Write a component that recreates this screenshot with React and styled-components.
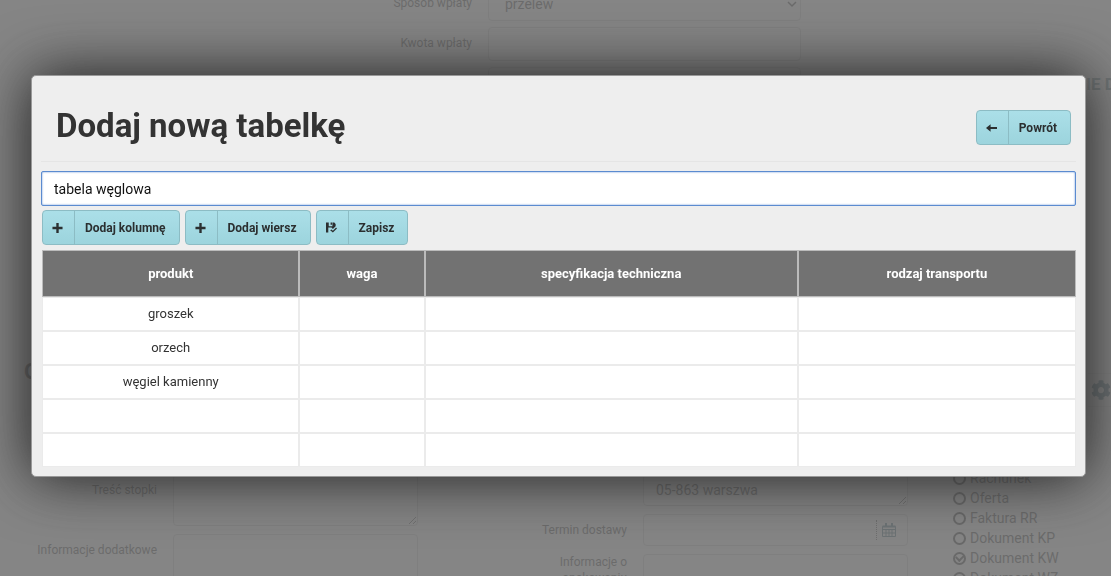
import React, { useState } from 'react';
import styled, { createGlobalStyle } from 'styled-components';
import { FaCog } from 'react-icons/fa';

const GlobalStyle = createGlobalStyle`
  * {
    box-sizing: border-box;
  }
  body {
    margin: 0;
    overflow: hidden;
    background: #f4f4f4;
    color: #444;
    font-family: Roboto, "Liberation Sans", sans-serif;
    font-size: 13px;
    line-height: 20px;
  }
  input, select, textarea, button {
    font-family: inherit;
  }
`

const Page = styled.main`
  height: 100vh;
  overflow: hidden;
  display: flex;
  flex-direction: column;
  justify-content: space-between;
`

const Top = styled.div`
  display: flex;
  justify-content: space-between;
`

const Payment = styled.section`
  display: grid;
  grid-template-columns: 472px 313px;
  column-gap: 16px;
  row-gap: 6px;
  margin-top: -13px;
`

const Label = styled.label`
  padding-top: ${props => props.$tall ? 0 : 6}px;
  font-size: 12px;
  line-height: ${props => props.$tall ? 16 : 20}px;
  text-align: right;
`

const fieldStyle = `
  width: 100%;
  margin: 0;
  border: 1px solid #ccc;
  border-radius: 4px;
  background: #f8f8f8;
  color: #444;
  font-size: 14px;
  line-height: 20px;
`

const Field = styled.input`
  ${fieldStyle}
  height: 34px;
  padding: 6px 12px;
`

const SelectWrap = styled.div`
  display: grid;
  align-items: center;
  svg {
    grid-area: 1 / 1;
    justify-self: end;
    margin-right: 4px;
    pointer-events: none;
  }
`

const Select = styled.select`
  ${fieldStyle}
  grid-area: 1 / 1;
  appearance: none;
  height: 34px;
  padding: 6px 16px;
`

const TextArea = styled.textarea`
  ${fieldStyle}
  display: block;
  height: 52px;
  padding: 5px 12px;
`

const Middle = styled.div`
  display: flex;
  justify-content: space-between;
  align-items: flex-end;
  height: 52px;
  margin-top: 187px;
  padding-left: 24px;
  color: #333;
`

const SectionTitle = styled.h2`
  margin: 0;
  align-self: flex-start;
  font-size: 22px;
  line-height: 34px;
`

const Gear = styled.div`
  display: flex;
  padding: 6px 0 6px 3px;
  border: 1px solid #ddd;
  border-width: 1px 0;
  color: #4a7280;
  font-size: 20px;
`

const SideTitle = styled.h2`
  margin: 0 0 7px;
  align-self: flex-end;
  width: 25px;
  white-space: nowrap;
  color: #5f8088;
  font-size: 17px;
  line-height: 20px;
`

const Details = styled.section`
  display: grid;
  grid-template-columns: 157px 245px 193px 265px 1fr;
  column-gap: 16px;
  height: 102px;
`

const Stack = styled.div`
  display: flex;
  flex-direction: column;
  gap: 8px;
`

const LabelCell = styled.div`
  display: flex;
  flex-direction: column;
  flex: 0 0 ${props => props.$height}px;
  padding-left: ${props => props.$indent || 0}px;
`

const Address = styled(TextArea)`
  height: 32px;
`

const DateBox = styled.div`
  ${fieldStyle}
  display: flex;
  height: 32px;
  input {
    flex: 1;
    min-width: 0;
    border: 0;
    background: none;
  }
`

const CalendarButton = styled.button`
  width: 31px;
  margin: 5px 0;
  padding: 0 6px 0 0;
  border: 0;
  border-left: 1px dotted #555;
  background: none;
  color: #4a7280;
  svg {
    display: block;
    margin: auto;
  }
`

const Options = styled.div`
  padding: 0 0 0 29px;
  margin-top: -6px;
`

const Option = styled.label`
  display: flex;
  align-items: center;
  gap: 4px;
  height: 20px;
  font-size: 14px;
`

const Radio = styled.input`
  appearance: none;
  display: flex;
  align-items: center;
  justify-content: center;
  width: 13px;
  height: 13px;
  margin: 0;
  border: 2px solid #333;
  border-radius: 50%;
  &:checked::before {
    content: '';
    width: 6px;
    height: 4px;
    margin-bottom: 2px;
    border: solid #333;
    border-width: 0 0 2px 2px;
    transform: rotate(-45deg);
  }
`

const Overlay = styled.div`
  position: fixed;
  inset: 0;
  display: flex;
  align-items: flex-start;
  padding: 75px 25px 0 31px;
  background: rgba(114, 114, 114, .86);
`

const Modal = styled.div`
  flex: 1;
  padding: 10px 9px 9px;
  border: 1px solid #999;
  border-radius: 5px;
  background: #eee;
  box-shadow: 0 0 60px #1c1c1c;
`

const Header = styled.header`
  display: flex;
  align-items: center;
  justify-content: space-between;
  height: 76px;
  padding: 8px 5px 0 15px;
  margin-bottom: 9px;
  border-bottom: 1px solid #e5e5e5;
`

const Title = styled.h1`
  margin: 0;
  padding-bottom: 4px;
  color: #333;
  font-size: 33px;
  line-height: 40px;
`

const NameInput = styled.input`
  display: block;
  width: 100%;
  height: 35px;
  padding: 6px 12px;
  border: 1px solid #5b8bd0;
  border-radius: 2px;
  outline: none;
  background: #fff;
  box-shadow: inset 0 0 2px #5b8bd0;
  color: #111;
  font-size: 14px;
`

const Toolbar = styled.div`
  display: flex;
  gap: 5px;
  padding: 4px 0 5px 1px;
`

const Button = styled.button`
  display: flex;
  height: 35px;
  padding: 0;
  border: 1px solid #8cbcc4;
  border-radius: 4px;
  background: linear-gradient(#abdfe8, #9cd4dd);
  color: #2b2f30;
  font-size: 12px;
  font-weight: bold;
  line-height: 33px;
  cursor: pointer;
  svg {
    width: 32px;
    height: 33px;
    padding: 11px 11px 10px 9px;
    border-right: 1px solid #8cbcc4;
  }
  span {
    padding: 1px 13px 0 10px;
  }
  &:hover {
    background: #9cd4dd;
  }
`

const Table = styled.table`
  width: 100%;
  padding-left: 1px;
  table-layout: fixed;
  border-collapse: separate;
  border-spacing: 0;
  color: #333;
  text-align: center;
`

const Th = styled.th`
  height: 47px;
  padding: 0;
  border: 1px solid #bbb;
  background: #727272;
  color: #fff;
`

const Td = styled.td`
  height: 34px;
  padding: 0;
  border: 1px solid #ebebeb;
  background: #fff;
`

const icons = {
  plus: <path d="M4.700 .5h2.600v4.200h4.200v2.600H7.300v4.200H4.700V7.300H.5V4.700h4.200z" />,
  back: <path d="M0 6L5 2V4.800H12V7.200H5V10z" />,
  save: (
    <path d="M0 0h3v4h4V0h2l1.500 1.500V4L7.500 7 6 5.500H2.500V11H0zM5 0h1.500v2.500H5zM4.500 8.500L6 7.500l1.500 1.500L11 5.500l1 1-4.500 4.500z" />
  ),
};

const IconButton = ({ icon, children, ...rest }) => (
  <Button type="button" {...rest}>
    <svg viewBox="0 0 12 12" fill="currentColor" aria-hidden="true">{icons[icon]}</svg>
    <span>{children}</span>
  </Button>
)

const CalendarIcon = () => (
  <svg width="14" height="14" viewBox="0 0 14 14" fill="none" stroke="currentColor" aria-hidden="true">
    <path d="M.5 3.500h13v10H.5zM.5 6.500h13M.5 10h13M4 6v7.500M7 6v7.500M10 6v7.500" />
    <path d="M.5 3.500h13M4 0v4M10 0v4" strokeWidth="2" />
  </svg>
)

const columns = ['produkt', 'waga', 'specyfikacja techniczna', 'rodzaj transportu'];
const widths = ['24.9%', '12.1%', '36.1%', '26.9%'];
const documents = ['Rachunek', 'Oferta', 'Faktura RR', 'Dokument KP', 'Dokument KW', 'Dokument WZ'];

const Background = () => (
  <Page>
    <Top>
      <Payment>
        <Label htmlFor="method">Sposób wpłaty</Label>
        <SelectWrap>
          <Select id="method"><option>przelew</option></Select>
          <svg width="10" height="10" viewBox="0 0 10 10" fill="none" stroke="#444" strokeWidth="1.5">
            <path d="M1 3l4 4 4-4" />
          </svg>
        </SelectWrap>
        <Label htmlFor="amount">Kwota wpłaty</Label>
        <Field id="amount" />
        <span />
        <Field aria-label="Waluta" />
      </Payment>
      <SideTitle>IE D</SideTitle>
    </Top>
    <Middle>
      <SectionTitle>O</SectionTitle>
      <Gear><FaCog /></Gear>
    </Middle>
    <Details>
      <Stack>
        <LabelCell $height={52}><Label htmlFor="footer">Treść stopki</Label></LabelCell>
        <LabelCell $height={52}><Label htmlFor="extra">Informacje dodatkowe</Label></LabelCell>
      </Stack>
      <Stack>
        <TextArea id="footer" />
        <TextArea id="extra" />
      </Stack>
      <Stack>
        <LabelCell $height={32} />
        <LabelCell $height={32}><Label htmlFor="term">Termin dostawy</Label></LabelCell>
        <LabelCell $height={52} $indent={90}><Label $tall htmlFor="packing">Informacje o opakowaniu</Label></LabelCell>
      </Stack>
      <Stack>
        <Address aria-label="Adres" defaultValue="05-863 warszwa" />
        <DateBox>
          <input id="term" />
          <CalendarButton type="button" aria-label="Kalendarz"><CalendarIcon /></CalendarButton>
        </DateBox>
        <TextArea id="packing" />
      </Stack>
      <Options>
        {documents.map(name => (
          <Option key={name}>
            <Radio type="radio" name="document" defaultChecked={name === 'Dokument KW'} />
            {name}
          </Option>
        ))}
      </Options>
    </Details>
  </Page>
)

const App = () => {
  const [name, setName] = useState('tabela węglowa');
  const [rows, setRows] = useState(['groszek', 'orzech', 'węgiel kamienny', '', '']);
  return (
    <>
      <GlobalStyle />
      <Background />
      <Overlay>
        <Modal role="dialog" aria-labelledby="title">
          <Header>
            <Title id="title">Dodaj nową tabelkę</Title>
            <IconButton icon="back">Powrót</IconButton>
          </Header>
          <NameInput aria-label="Nazwa tabelki" value={name} onChange={e => setName(e.target.value)} />
          <Toolbar>
            <IconButton icon="plus">Dodaj kolumnę</IconButton>
            <IconButton icon="plus" onClick={() => setRows([...rows, ''])}>Dodaj wiersz</IconButton>
            <IconButton icon="save">Zapisz</IconButton>
          </Toolbar>
          <Table>
            <colgroup>
              {widths.map(width => <col key={width} style={{ width }} />)}
            </colgroup>
            <thead>
              <tr>{columns.map(column => <Th key={column}>{column}</Th>)}</tr>
            </thead>
            <tbody>
              {rows.map((row, i) => (
                <tr key={i}>
                  {columns.map((column, j) => <Td key={column}>{j === 0 ? row : ''}</Td>)}
                </tr>
              ))}
            </tbody>
          </Table>
        </Modal>
      </Overlay>
    </>
  )
}

export default App;
